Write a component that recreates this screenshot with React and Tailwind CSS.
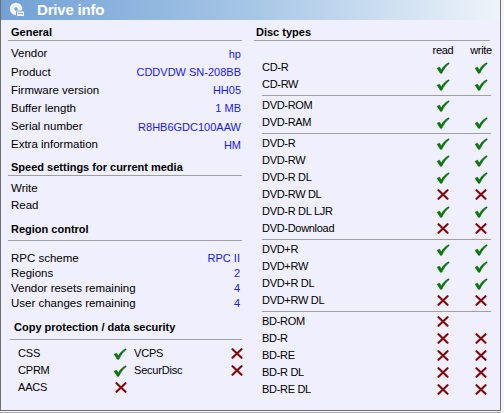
import React from "react";

const Check = () => (
  <svg width="14" height="12" viewBox="0 0 14 12" className="block">
    <path d="M1.2 6.2 L3.6 5.2 L5.2 8.2 C7 5 9.5 2.2 12.8 0.8 L13.2 1.6 C10.2 3.8 8 6.8 5.8 11.2 L4.4 11.2 Z" fill="#067e06" stroke="#005a00" strokeWidth="0.6" strokeLinejoin="round" />
  </svg>
);

const Cross = () => (
  <svg width="12" height="11" viewBox="0 0 12 11" className="block">
    <path d="M1.5 1.2 L10.5 9.8 M10.5 1.2 L1.5 9.8" stroke="#820808" strokeWidth="2.1" strokeLinecap="round" />
  </svg>
);

const general = [
  ["Vendor", "hp"],
  ["Product", "CDDVDW SN-208BB"],
  ["Firmware version", "HH05"],
  ["Buffer length", "1 MB"],
  ["Serial number", "R8HB6GDC100AAW"],
  ["Extra information", "HM"],
];

const region = [
  ["RPC scheme", "RPC II"],
  ["Regions", "2"],
  ["Vendor resets remaining", "4"],
  ["User changes remaining", "4"],
];

const groups = [
  [
    ["CD-R", "y", "y"],
    ["CD-RW", "y", "y"],
  ],
  [
    ["DVD-ROM", "y", ""],
    ["DVD-RAM", "y", "y"],
  ],
  [
    ["DVD-R", "y", "y"],
    ["DVD-RW", "y", "y"],
    ["DVD-R DL", "y", "y"],
    ["DVD-RW DL", "n", "n"],
    ["DVD-R DL LJR", "y", "y"],
    ["DVD-Download", "n", "n"],
  ],
  [
    ["DVD+R", "y", "y"],
    ["DVD+RW", "y", "y"],
    ["DVD+R DL", "y", "y"],
    ["DVD+RW DL", "n", "n"],
  ],
  [
    ["BD-ROM", "n", ""],
    ["BD-R", "n", "n"],
    ["BD-RE", "n", "n"],
    ["BD-R DL", "n", "n"],
    ["BD-RE DL", "n", "n"],
  ],
];

const Mark = ({ v }) =>
  v === "y" ? <Check /> : v === "n" ? <Cross /> : null;

const Heading = ({ children, className = "" }) => (
  <div className={"h-[16px] leading-[16px] font-bold text-[11px] text-black " + className}>
    {children}
  </div>
);

export default function App() {
  return (
    <div
      className="w-[504px] h-[413px] bg-[#f6f6f8] overflow-hidden"
      style={{ fontFamily: '"Liberation Sans", Arial, sans-serif' }}
    >
      <div className="w-[501px] h-[411px] border-l border-r border-b border-[#6e6e6e] flex flex-col">
        {/* title bar */}
        <div className="h-[20px] flex items-center bg-gradient-to-r from-[#72a1d6] via-[#a6c6e6] to-[#eef4fa]">
          <div className="ml-[8px] w-[16px] h-[16px]">
            <svg width="16" height="16" viewBox="0 0 16 16">
              <circle cx="7" cy="7" r="6.2" fill="#f4f8fc" />
              <circle cx="7" cy="7" r="1.8" fill="#74a3d7" />
              <rect x="7.5" y="9" width="8" height="5.5" rx="1" fill="#f4f8fc" stroke="#74a3d7" strokeWidth="1" />
              <rect x="9" y="11.2" width="5" height="1" fill="#74a3d7" />
            </svg>
          </div>
          <div className="ml-[12px] text-white font-bold text-[15px] leading-[20px] tracking-[-0.2px]">
            Drive info
          </div>
        </div>

        {/* body */}
        <div className="flex-1 flex bg-[#efeffd]">
          {/* left column */}
          <div className="w-[247px] pt-[4px] text-[11.5px] text-black">
            <Heading className="pl-[10px]">General</Heading>
            <div className="h-px bg-[#a0a0a0] ml-[7px] mr-[6px]" />
            <div className="mt-[4px]">
              {general.map(([k, v]) => (
                <div key={k} className="h-[18.2px] flex items-center justify-between pl-[10px] pr-[7px]">
                  <span>{k}</span>
                  <span className="text-[#1818f0] text-[11px]">{v}</span>
                </div>
              ))}
            </div>
            <Heading className="pl-[10px] mt-[5px]">Speed settings for current media</Heading>
            <div className="h-px bg-[#a0a0a0] ml-[7px] mr-[6px]" />
            <div className="mt-[4px]">
              <div className="h-[17px] flex items-center pl-[10px]">Write</div>
              <div className="h-[17px] flex items-center pl-[10px]">Read</div>
            </div>
            <Heading className="pl-[10px] mt-[7px]">Region control</Heading>
            <div className="h-px bg-[#a0a0a0] ml-[7px] mr-[6px] mt-[3px]" />
            <div className="mt-[10px]">
              {region.map(([k, v]) => (
                <div key={k} className="h-[15px] flex items-center justify-between pl-[10px] pr-[8px]">
                  <span>{k}</span>
                  <span className="text-[#1818f0] text-[11px]">{v}</span>
                </div>
              ))}
            </div>
            <Heading className="pl-[13px] mt-[8px]">Copy protection / data security</Heading>
            <div className="h-px bg-[#a0a0a0] ml-[9px] mr-[6px] mt-[4px]" />
            <div className="mt-[5px] pl-[17px] text-[11px] tracking-[-0.2px]">
              <div className="h-[17px] flex items-center">
                <span className="w-[95px]">CSS</span>
                <span className="w-[14px]"><Check /></span>
                <span className="w-[7px]" />
                <span className="w-[97px]">VCPS</span>
                <span className="w-[12px]"><Cross /></span>
              </div>
              <div className="h-[17px] flex items-center">
                <span className="w-[95px]">CPRM</span>
                <span className="w-[14px]"><Check /></span>
                <span className="w-[7px]" />
                <span className="w-[97px]">SecurDisc</span>
                <span className="w-[12px]"><Cross /></span>
              </div>
              <div className="h-[17px] flex items-center">
                <span className="w-[97px]">AACS</span>
                <span className="w-[12px]"><Cross /></span>
              </div>
            </div>
          </div>

          {/* right column */}
          <div className="flex-1 pt-[4px] text-[11px] text-black">
            <Heading className="pl-[8px]">Disc types</Heading>
            <div className="h-px bg-[#a0a0a0] ml-[6px] mr-[10px]" />
            <div className="mt-[1px] h-[17px] flex items-center pl-[14px] tracking-[-0.3px]">
              <span className="flex-1" />
              <span className="w-[38px] text-center">read</span>
              <span className="w-[38px] text-center">write</span>
            </div>
            {groups.map((g, gi) => (
              <div key={gi}>
                {gi > 0 && (
                  <div className="h-[4px] pt-[2px]">
                    <div className="h-px bg-[#a0a0a0] ml-[14px] mr-[9px]" />
                  </div>
                )}
                {g.map(([name, r, w]) => (
                  <div key={name} className="h-[17px] flex items-center pl-[14px] tracking-[-0.3px]">
                    <span className="flex-1">{name}</span>
                    <span className="w-[38px] flex justify-center"><Mark v={r} /></span>
                    <span className="w-[38px] flex justify-center"><Mark v={w} /></span>
                  </div>
                ))}
              </div>
            ))}
          </div>
        </div>
      </div>
      <div className="w-[501px] h-px mt-px bg-[#a8a8a8]" />
    </div>
  );
}
